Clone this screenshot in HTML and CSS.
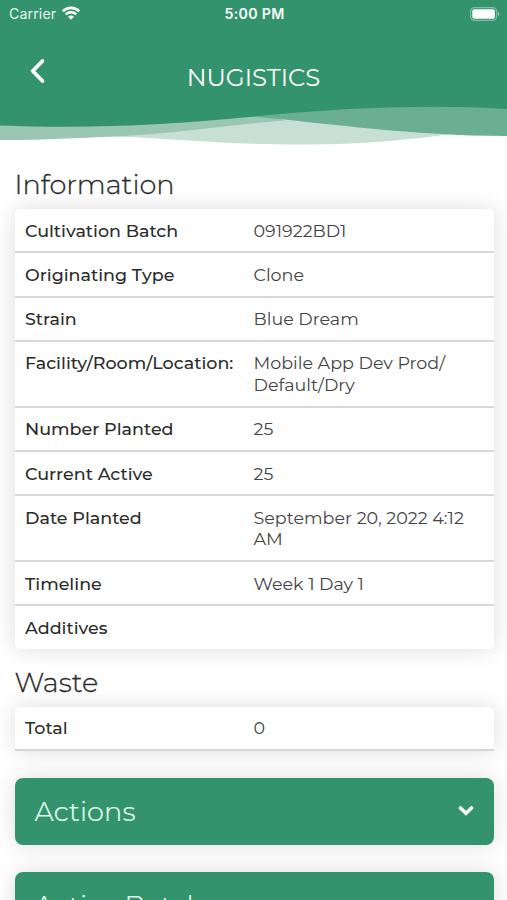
FILE: index.html
```
<!DOCTYPE html>
<html lang="en">
<head>
    <meta charset="utf-8">
    <title>Nugistics</title>
    <link rel="stylesheet" href="styles.css">
</head>
<body>
    <header class="header">
        <div class="status">
            <div class="carrier">
                <span class="carrier-name">Carrier</span>
                <svg class="wifi" viewBox="0 0 18 14">
                    <path d="M.8 5.200C5.300.800 12.700.800 17.200 5.200" fill="none" stroke="#fff" stroke-width="2.600"/>
                    <path d="M3.700 8.400C6.700 5.500 11.300 5.500 14.300 8.400" fill="none" stroke="#fff" stroke-width="2.300"/>
                    <path d="M6 10.700C7.600 9.100 10.400 9.100 12 10.700L9 13.700Z" fill="#fff"/>
                </svg>
            </div>
            <span class="time">5:00 PM</span>
            <svg class="battery" viewBox="0 0 30 14">
                <rect x=".6" y=".6" width="26" height="12.800" rx="3.800" fill="none" stroke="#fff" stroke-opacity=".4" stroke-width="1.200"/>
                <rect x="2.300" y="2.300" width="22.600" height="9.400" rx="2" fill="#fff"/>
                <path d="M28 4.800Q31.200 7 28 9.200Z" fill="#fff" fill-opacity=".5"/>
            </svg>
        </div>
        <div class="nav">
            <svg class="back" viewBox="0 0 16 26">
                <path d="M12.500 3L2.700 13L12.500 23" fill="none" stroke="#fff" stroke-width="3.800" stroke-linecap="round" stroke-linejoin="round"/>
            </svg>
            <h1 class="title">NUGISTICS</h1>
        </div>
        <svg class="waves" viewBox="0 0 507 50">
            <path d="M110 30L118 36.500C180 39 220 44.500 305 44.500C360 44.500 410 40 455 33.500L280 18Z" fill="#c8dfd5"/>
            <path d="M0 20V40C40 40.500 70 38 118 36.500C190 32 235 24 285 20.500L254 10Z" fill="#9bc6b1"/>
            <path d="M230 15C310 20 400 36 507 36V5H380Z" fill="#6aaf92"/>
            <path d="M0 0H507V9C430 4 340 8 254 16.500C170 25 90 29 0 25.500Z" fill="#32936c"/>
        </svg>
    </header>

    <main class="content">
        <h2 class="heading">Information</h2>
        <div class="card">
            <div class="row"><span class="label">Cultivation Batch</span><span class="value">091922BD1</span></div>
            <div class="row"><span class="label">Originating Type</span><span class="value">Clone</span></div>
            <div class="row"><span class="label">Strain</span><span class="value">Blue Dream</span></div>
            <div class="row"><span class="label">Facility/Room/Location:</span><span class="value">Mobile App Dev Prod/<br>Default/Dry</span></div>
            <div class="row"><span class="label">Number Planted</span><span class="value">25</span></div>
            <div class="row"><span class="label">Current Active</span><span class="value">25</span></div>
            <div class="row"><span class="label">Date Planted</span><span class="value">September 20, 2022 4:12<br>AM</span></div>
            <div class="row"><span class="label">Timeline</span><span class="value">Week 1 Day 1</span></div>
            <div class="row"><span class="label">Additives</span><span class="value"></span></div>
        </div>

        <h2 class="heading waste">Waste</h2>
        <div class="card total">
            <div class="row"><span class="label">Total</span><span class="value">0</span></div>
        </div>

        <div class="panel">
            <span>Actions</span>
            <svg class="chevron" viewBox="0 0 16 12">
                <path d="M2.500 3L8 8.300L13.500 3" fill="none" stroke="#fff" stroke-width="3.600" stroke-linecap="round"/>
            </svg>
        </div>
        <div class="panel">
            <span>Active Batch</span>
        </div>
    </main>
</body>
</html>
```
FILE: styles.css
```
* { box-sizing: border-box; }
body { margin: 0; height: 900px; overflow: hidden; background: #fff; color: #2b2b2b; font-family: Montserrat, Inter, sans-serif; }

.header { height: 150px; color: #fff; }
.status { height: 28px; padding: 0 7px 0 9px; background: #32936c; display: grid; grid-template-columns: 1fr auto 1fr; align-items: center; font-family: Inter, sans-serif; font-size: 14.2px; }
.carrier { display: flex; align-items: center; gap: 6px; }
.carrier-name { margin-top: -1px; letter-spacing: .1px; opacity: .9; }
.wifi { width: 18px; height: 14px; margin-top: -2px; }
.time { margin-top: -1px; font-weight: 600; letter-spacing: .3px; }
.battery { width: 30px; height: 14px; margin-top: -1px; justify-self: end; }
.nav { height: 72px; padding: 0 30px; background: #32936c; display: grid; grid-template-columns: 16px 1fr 16px; }
.back { width: 16px; height: 26px; margin-top: 30px; }
.title { margin: 34px 0 0; font-size: 24.4px; line-height: 30px; font-weight: 400; text-align: center; }
.waves { display: block; width: 507px; height: 50px; }

.content { padding: 18px 13.5px 0 14.5px; }
.heading { margin: 0 0 7px; font-size: 27.2px; line-height: 34px; font-weight: 300; -webkit-text-stroke: .3px currentColor; }
.card { background: #fff; border-radius: 5px; box-shadow: 0 0 22px rgba(0,0,0,.14); }
.row { display: grid; grid-template-columns: 228.5px 1fr; padding: 10.6px 10.5px 10.2px; border-bottom: 2px solid #d8d8d8; font-size: 17.5px; line-height: 21.5px; }
.row:last-child { border-bottom: none; }
.label { font-weight: 500; }
.value { color: #444; }
.waste { margin-top: 17px; }
.total .row { border-bottom: 2px solid #d6d6d6; }
.panel { display: flex; align-items: center; justify-content: space-between; height: 67px; margin-top: 27px; padding: 0 20px; background: #32936c; border-radius: 8px; box-shadow: 0 0 22px rgba(0,0,0,.14); color: #e9fff5; font-size: 27.2px; font-weight: 300; letter-spacing: .1px; -webkit-text-stroke: .2px currentColor; }
.chevron { width: 16px; height: 12px; }
```
